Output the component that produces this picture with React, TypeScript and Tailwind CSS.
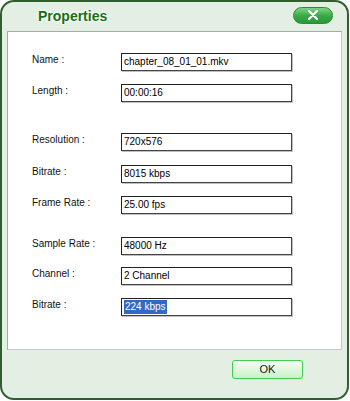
import React from "react";

const rows: { label: string; value: string; mt: string; selected?: boolean }[] = [
  { label: "Name :", value: "chapter_08_01_01.mkv", mt: "mt-0" },
  { label: "Length :", value: "00:00:16", mt: "mt-[13px]" },
  { label: "Resolution :", value: "720x576", mt: "mt-[31px]" },
  { label: "Bitrate :", value: "8015 kbps", mt: "mt-[14px]" },
  { label: "Frame Rate :", value: "25.00 fps", mt: "mt-[13px]" },
  { label: "Sample Rate :", value: "48000 Hz", mt: "mt-[23px]" },
  { label: "Channel :", value: "2 Channel", mt: "mt-[12px]" },
  { label: "Bitrate :", value: "224 kbps", mt: "mt-[13px]", selected: true },
];

export default function App() {
  return (
    <div
      className="w-[350px] h-[401px] bg-white"
      style={{ fontFamily: '"Liberation Sans", Arial, sans-serif' }}
    >
      <div className="relative w-[349px] h-[400px] border-2 border-[#2f5f2f] rounded-[14px] bg-[#e3efe3] flex flex-col overflow-hidden">
        {/* title bar */}
        <div className="h-[29px] flex items-center justify-between pl-[36px] pr-[14px] shrink-0">
          <span
            className="text-[14px] font-bold text-[#157015] leading-none mt-[-2px]"
            style={{ textShadow: "0 0 3px #fff, 0 0 3px #fff, 0 0 2px #fff" }}
          >
            Properties
          </span>
          <div className="w-[40px] h-[17px] mt-[-3px] rounded-full border border-[#2a8a36] bg-gradient-to-b from-[#7fd486] via-[#3aab46] to-[#2b9838] flex items-center justify-center">
            <svg width="12" height="10" viewBox="0 0 12 10">
              <path d="M2 1 L10 9 M10 1 L2 9" stroke="#ffffff" strokeWidth="2.2" strokeLinecap="round" />
            </svg>
          </div>
        </div>

        {/* panel */}
        <div className="relative ml-[5px] w-[335px] h-[319px] bg-white border border-[#a8a8a8] border-b-[#c8c8c8] border-r-[#c8c8c8] pt-[21px] pl-[24px] shrink-0">
          {rows.map((r, i) => (
            <div key={i} className={`flex items-center h-[18px] ${r.mt}`}>
              <div className="w-[89px] text-[10px] text-[#111] leading-none mt-[-4px]">{r.label}</div>
              <div className="w-[171px] h-[18px] border border-[#222] border-b-[#444] border-r-[#444] shadow-[1px_1px_0_#c0c0c0] flex items-center pl-[2px] text-[10px] text-black leading-none">
                {r.selected ? (
                  <span className="bg-[#316ac5] text-white px-[1px] py-[2px]">{r.value}</span>
                ) : (
                  <span>{r.value}</span>
                )}
              </div>
            </div>
          ))}
        </div>

        {/* footer */}
        <div className="flex justify-end pr-[44px] pt-[10px]">
          <div className="w-[71px] h-[19px] rounded-[3px] border border-[#3fcf4a] bg-gradient-to-b from-[#f4fff4] to-[#c9f0c9] flex items-center justify-center text-[11px] text-[#222]">
            OK
          </div>
        </div>
      </div>
    </div>
  );
}
